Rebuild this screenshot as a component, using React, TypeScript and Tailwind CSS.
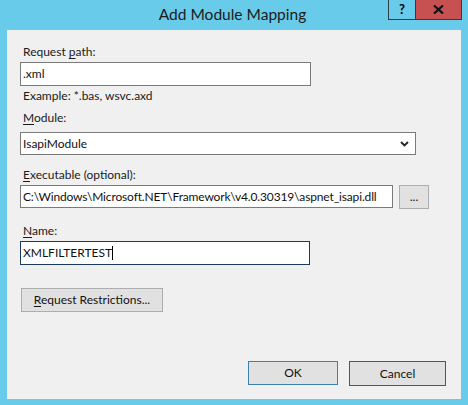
import React from 'react';

const font = { fontFamily: '"Segoe UI", Lato, "Noto Sans", sans-serif' };

function Label({ pre = '', ul, rest }: { pre?: string; ul: string; rest: string }) {
    return (
        <div className="h-4 leading-4 text-[12px] text-[#1a1a1a] pl-[3px]">
            {pre}
            <span className="underline underline-offset-2">{ul}</span>
            {rest}
        </div>
    );
}

function Field({ value, width, focused, caret }: { value: string; width: string; focused?: boolean; caret?: boolean }) {
    return (
        <div
            className={`${width} h-6 bg-white border flex items-center px-[2px] text-[12px] text-[#111] ${
                focused ? 'border-[#1c3b5c]' : 'border-[#7a7a7a]'
            }`}
        >
            <span className="whitespace-nowrap">{value}</span>
            {caret && <span className="w-px h-[14px] bg-black" />}
        </div>
    );
}

export default function App() {
    return (
        <div className="w-[468px] h-[405px] bg-[#68cbe9] flex flex-col" style={font}>
            {/* title bar */}
            <div className="h-[30px] flex items-start">
                <div className="flex-1 h-[30px] flex items-center justify-center pl-[77px] text-[15.5px] text-[#1b1b1b]">
                    Add Module Mapping
                </div>
                <div className="flex h-[20px] border border-t-0 border-[#2f3d48] mr-[6px]">
                    <div className="w-[27px] flex items-center justify-center text-[13px] font-bold text-black border-r border-[#2f3d48]">
                        ?
                    </div>
                    <div className="w-[45px] bg-[#c75050] flex items-center justify-center">
                        <svg width="11" height="9" viewBox="0 0 11 9">
                            <path d="M1 0.5 L10 8.5 M10 0.5 L1 8.5" stroke="#111" strokeWidth="2.2" />
                        </svg>
                    </div>
                </div>
            </div>

            {/* content */}
            <div className="mx-[7px] h-[369px] bg-[#f0f0f0] flex flex-col pl-[13px] pr-[15px] pt-[14px]">
                <Label pre="Request " ul="p" rest="ath:" />
                <div className="mt-[2px]">
                    <Field value=".xml" width="w-[291px]" />
                </div>
                <div className="mt-[2px] h-4 leading-4 text-[12px] text-[#1a1a1a] pl-[3px]">Example: *.bas, wsvc.axd</div>

                <div className="mt-[6px]">
                    <Label ul="M" rest="odule:" />
                </div>
                <div className="mt-[6px] w-[396px] h-[23px] bg-white border border-[#7a7a7a] flex items-center justify-between pl-[2px] pr-[6px] text-[12px] text-[#111]">
                    <span>IsapiModule</span>
                    <svg width="9" height="6" viewBox="0 0 9 6">
                        <path d="M1 1 L4.5 4.5 L8 1" fill="none" stroke="#222" strokeWidth="1.8" />
                    </svg>
                </div>

                <div className="mt-[12px]">
                    <Label ul="E" rest="xecutable (optional):" />
                </div>
                <div className="mt-[2px] flex items-start gap-[6px]">
                    <div className="w-[373px] h-[23px] bg-white border border-[#7a7a7a] flex items-center px-[2px] text-[12px] text-[#111] overflow-hidden">
                        <span className="whitespace-nowrap tracking-[-0.15px]">C:\Windows\Microsoft.NET\Framework\v4.0.30319\aspnet_isapi.dll</span>
                    </div>
                    <div className="w-[30px] h-[24px] bg-[#e1e1e1] border border-[#adadad] flex items-center justify-center text-[12px] text-[#111]">
                        ...
                    </div>
                </div>

                <div className="mt-[14px]">
                    <Label ul="N" rest="ame:" />
                </div>
                <div className="mt-[2px]">
                    <Field value="XMLFILTERTEST" width="w-[290px]" focused caret />
                </div>

                <div className="mt-[23px] ml-[1px] w-[142px] h-6 bg-[#e1e1e1] border border-[#adadad] flex items-center justify-center text-[12px] text-[#111]">
                    <span>
                        <span className="underline underline-offset-2">R</span>equest Restrictions...
                    </span>
                </div>

                <div className="mt-[49px] flex justify-end gap-[11px]">
                    <div className="w-[90px] h-[24px] bg-[#e1e1e1] border border-[#3c7fb1] flex items-center justify-center text-[12px] text-[#111]">
                        OK
                    </div>
                    <div className="w-[97px] h-[25px] bg-[#e1e1e1] border border-[#555] flex items-center justify-center text-[12px] text-[#111]">
                        Cancel
                    </div>
                </div>
            </div>
        </div>
    );
}
